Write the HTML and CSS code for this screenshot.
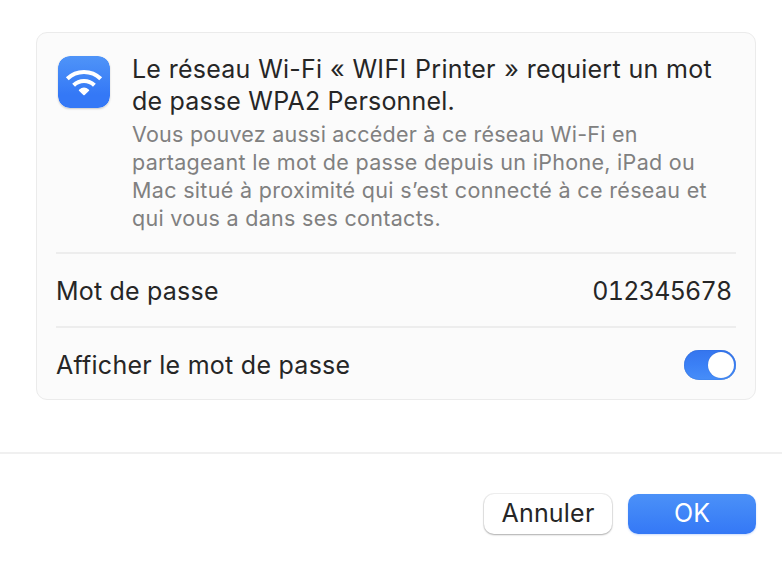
FILE: index.html
```html
<!DOCTYPE html>
<html lang="fr">
<head>
<meta charset="utf-8">
<title>Wi-Fi</title>
<link rel="stylesheet" href="styles.css">
</head>
<body>
<main class="sheet">
  <section class="card">
    <header class="intro">
      <svg class="app-icon" viewBox="0 0 52 52" aria-hidden="true">
        <defs><linearGradient id="blue" x1="0" y1="0" x2="0" y2="1"><stop offset="0" stop-color="#4f94f8"/><stop offset=".75" stop-color="#3478f6"/><stop offset="1" stop-color="#3478f6"/></linearGradient></defs>
        <rect width="52" height="52" rx="12" fill="url(#blue)"/>
        <g fill="none" stroke="#fff" stroke-width="4.1">
          <path d="M9.3 22.8a24 24 0 0 1 33.4 0"/>
          <path d="M15.6 29.2a15 15 0 0 1 20.8 0"/>
        </g>
        <path d="M21 33.8q5-4.8 10 0q.5.5 0 1L26.7 38.9q-.7.6-1.4 0L21 34.8q-.5-.5 0-1z" fill="#fff"/>
      </svg>
      <div class="copy">
        <h1 class="title"><span class="line t1">Le réseau Wi-Fi « <span class="ssid">WIFI Printer »</span> requiert un mot</span> <span class="line t2">de passe WPA2 Personnel.</span></h1>
        <p class="hint"><span class="line h1">Vous pouvez aussi accéder à ce réseau Wi-Fi en</span> <span class="line h2">partageant le mot de passe depuis un iPhone, iPad ou</span> <span class="line h3">Mac situé à proximité qui s’est connecté à ce réseau et</span> <span class="line h4">qui vous a dans ses contacts.</span></p>
      </div>
    </header>
    <div class="row">
      <span class="label pw">Mot de passe</span>
      <span class="value">012345678</span>
    </div>
    <div class="row">
      <span class="label show">Afficher le mot de passe</span>
      <span class="switch" role="switch" aria-checked="true"><span class="knob"></span></span>
    </div>
  </section>
  <footer class="actions">
    <button class="btn cancel">Annuler</button>
    <button class="btn ok">OK</button>
  </footer>
</main>
</body>
</html>
```
FILE: styles.css
```css
* { box-sizing: border-box; }
body { margin: 0; background: #fff; color: #262626; font-family: Inter, "Liberation Sans", sans-serif; }
.sheet { height: 564px; padding-top: 32px; display: flex; flex-direction: column; overflow: hidden; }
.card { width: 720px; height: 368px; margin-left: 36px; padding: 0 19px; background: #fbfbfb; border: 1px solid #ebebeb; border-radius: 11px; }
.intro { height: 219px; padding: 20px 0 0 2px; display: flex; align-items: flex-start; }
.app-icon { width: 52px; height: 52px; margin: 3px 22px 0 0; flex: none; border-radius: 12px; box-shadow: 0 1px 2px #0003; }
.title, .hint { margin: 0; }
.line { display: block; width: max-content; white-space: nowrap; }
.title { font-size: 25px; font-weight: 430; line-height: 32px; }
.t1 { letter-spacing: .22px; }
.ssid { letter-spacing: .34px; word-spacing: 1px; }
.t1 { word-spacing: .4px; }
.t2 { letter-spacing: .2px; }
.hint { margin-top: 3px; font-size: 21.5px; font-weight: 420; line-height: 28px; color: #808080; }
.h1 { letter-spacing: .24px; }
.h2 { letter-spacing: .3px; }
.h3 { letter-spacing: .33px; }
.h4 { letter-spacing: .3px; }
.row { height: 74px; padding-top: 2px; border-top: 2px solid #ededed; display: flex; align-items: center; justify-content: space-between; font-size: 25px; font-weight: 420; }
.pw { letter-spacing: .2px; }
.show { letter-spacing: .26px; }
.value { padding-right: 4.5px; font-variant-numeric: tabular-nums; letter-spacing: -.75px; }
.switch { width: 52px; height: 30px; padding: 2px; border-radius: 15px; background: linear-gradient(#3575ee, #3b80f6 50%, #478ef8); box-shadow: inset 0 0 1px #1d58b8; display: flex; justify-content: flex-end; }
.knob { width: 26px; height: 26px; border-radius: 50%; background: #fff; box-shadow: 0 0 1px #0003; }
.actions { margin-top: 52px; padding: 40px 26px 0 0; border-top: 2px solid #f0f0f0; display: flex; justify-content: flex-end; gap: 16px; }
.btn { height: 40px; width: 128px; padding: 0 0 2px; border: 0; border-radius: 10px; background: #fff; color: #262626; font: 430 25px Inter, sans-serif; }
.cancel { letter-spacing: .2px; box-shadow: 0 0 0 1px #0000000f, 0 1px 2px #00000048; }
.ok { color: #fff; background: linear-gradient(#4b91f8, #3478f6); box-shadow: 0 1px 2px #3478f640; }
```
